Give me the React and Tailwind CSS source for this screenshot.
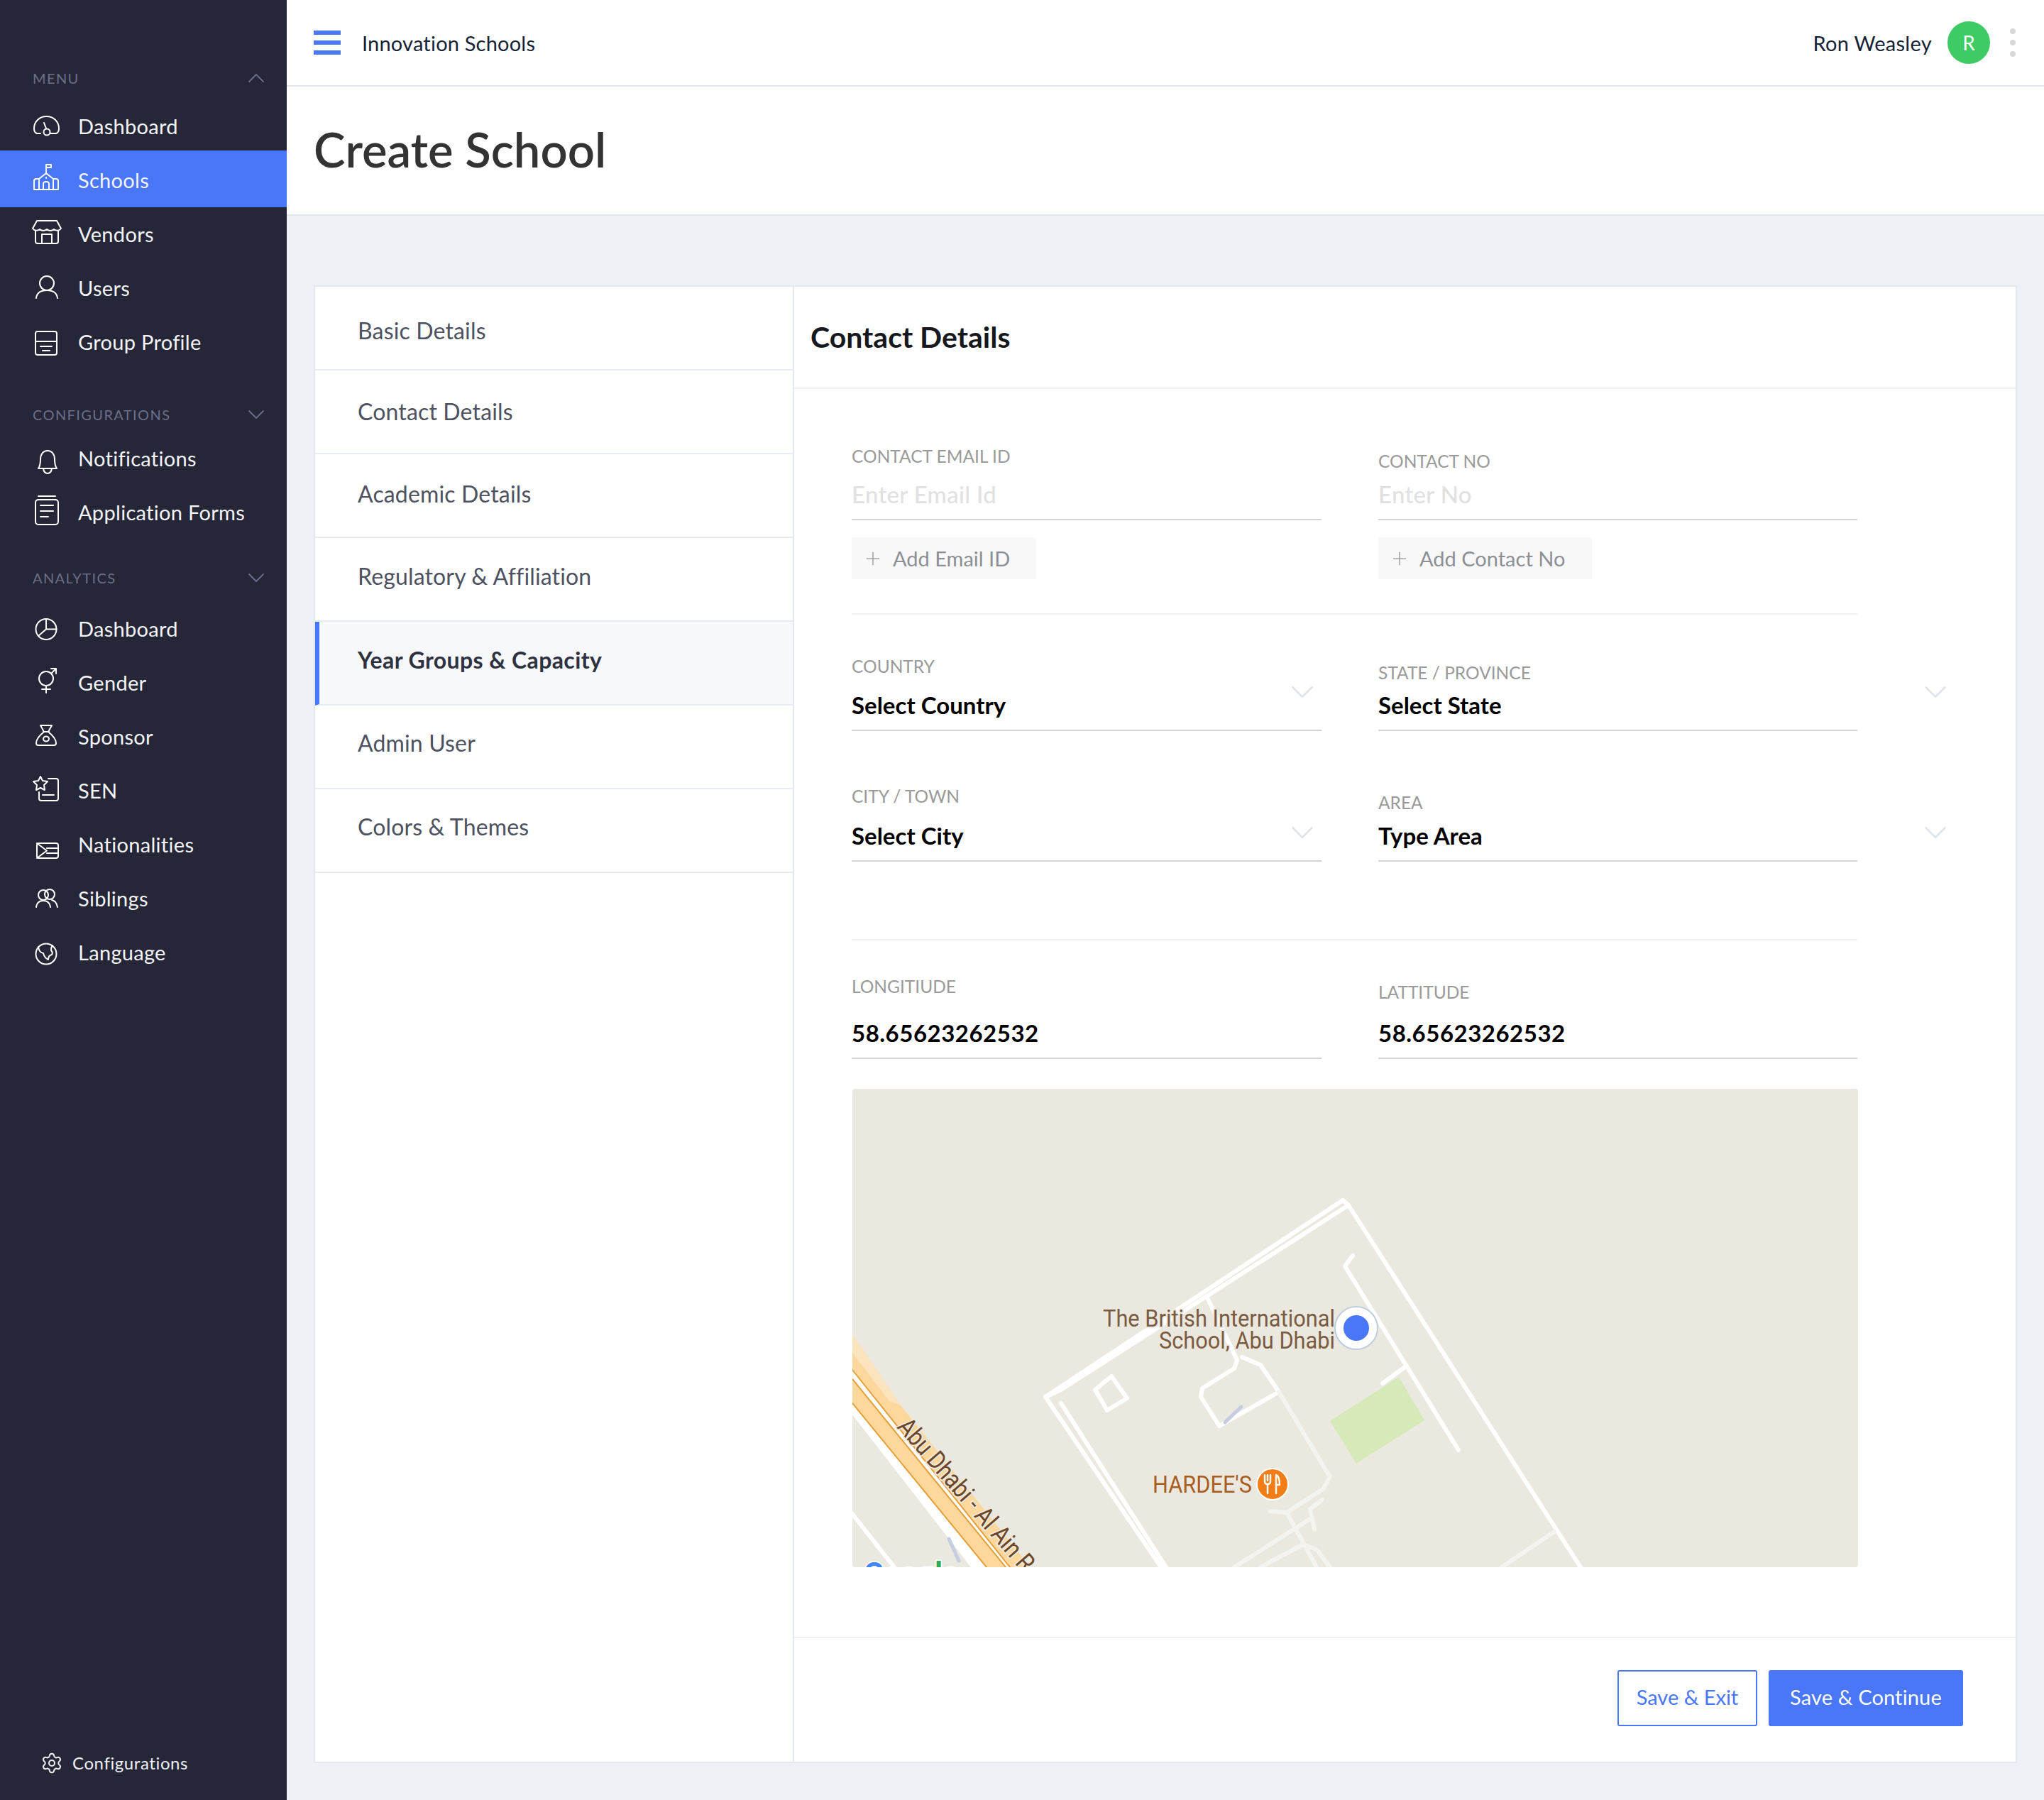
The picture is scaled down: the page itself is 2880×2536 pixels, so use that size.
import React from 'react';
import { ChevronDown, ChevronUp, Plus, Settings } from 'lucide-react';

const Icon = ({ children }) => (
  <svg viewBox="0 0 40 40" fill="none" stroke="currentColor" strokeWidth="2" strokeLinecap="round" strokeLinejoin="round" className="h-10 w-10 shrink-0 overflow-visible">
    {children}
  </svg>
);

const icons = {
  gauge: <><path d="M11 30H6Q2 29 2 23C2 13 10 6 19.5 6C29 6 37 13 37 23Q37 29 33 30H25" /><circle cx="20" cy="28" r="4.5" /><path d="M19 23L16 15" /></>,
  school: <><path d="M2 33V21Q2 18 5 18H9L19 10L29 18H33Q36 18 36 21V33Z" /><path d="M9 18V33M29 18V33M15 33V25Q15 22 19 22Q23 22 23 25V33" /><path d="M19 10V-2H26V2H19M19 16V17" /></>,
  store: <><path d="M6 1H34L40 12Q36 17 30 13Q25 17 20 13Q15 17 10 13Q4 17 0 12Z" /><path d="M4 15V30Q4 33 7 33H33Q36 33 36 30V15M13 33V20H27V33" /></>,
  user: <><circle cx="20" cy="13" r="10" /><path d="M5 34C6 26 12 23 20 23C28 23 34 26 35 34" /></>,
  profile: <><rect x="4" y="5" width="30" height="33" rx="3" /><path d="M4 19H34M11 26H27M14 32H24" /></>,
  bell: <><path d="M8 34C11 30 11 26 11 21C11 14 15 9 21 9C27 9 31 14 31 21C31 26 31 30 34 34Z" /><path d="M15 34Q16 41 21 41Q26 41 27 34" /></>,
  forms: <><path d="M8 -3H32" /><rect x="4" y="2" width="32" height="35" rx="4" /><path d="M11 10H29M11 18H29M11 26H22" /></>,
  pie: <><circle cx="19" cy="20.5" r="14.5" /><path d="M19 6V20.5H33.5M19 20.5L8 30" /></>,
  gender: <><circle cx="19" cy="14" r="10" /><path d="M26 7L33 0M26 0H33V7M19 24V34M13 29H25" /></>,
  sponsor: <><path d="M11 4H27L22 13Q33 22 33 29Q33 32 30 32H8Q5 32 5 29Q5 22 16 13ZM15 13H23" /><ellipse cx="19" cy="23" rx="4" ry="3.5" /></>,
  sen: <><path d="M22 3H33Q36 3 36 6V31Q36 34 33 34H12Q9 34 9 31V22M14 26H30" /><path d="M11 0L14 6L21 7L16 12L17 19L11 16L5 19L6 12L1 7L8 6Z" /></>,
  flag: <><rect x="6" y="18" width="30" height="21" rx="3" /><path d="M6 18L20 28.5L6 39M20 25H36M20 32H36" /></>,
  siblings: <><circle cx="15" cy="15" r="7" /><circle cx="24" cy="14" r="7" /><path d="M5 32C6 25 10 23 15 23C20 23 24 25 25 32M27 22C31 23 34 26 35 32" /></>,
  globe: <><circle cx="19" cy="22" r="14.5" /><path d="M8 12Q9 20 15 21Q17 28 22 30Q22 24 27 23Q29 20 26 17Q26 12 28 10" /></>,
};

const NavItem = ({ icon, label, active }) => (
  <div className={active ? 'flex h-[80px] -mt-[4px] pt-[4px] items-center gap-[24px] bg-[#4a76f8] pl-[46px] text-white' : 'flex h-[76px] items-center gap-[24px] pl-[46px] text-white'}>
    <Icon>{icons[icon]}</Icon>
    <span className="text-[29px] tracking-[0.3px] text-[#f4f4f6]">{label}</span>
  </div>
);

const SectionHead = ({ label, open, className }) => (
  <div className={`flex h-[40px] items-center justify-between pl-[46px] pr-[23px] text-[#6c6e88] ${className}`}>
    <span className="text-[20px] tracking-[1.4px] uppercase">{label}</span>
    {open ? <ChevronUp size={40} strokeWidth={1.1} /> : <ChevronDown size={40} strokeWidth={1.1} />}
  </div>
);

const Sidebar = () => (
  <aside className="flex w-[404px] shrink-0 flex-col bg-[#252638] pt-[90px]">
    <SectionHead label="Menu" open className="mb-[10px]" />
    <NavItem icon="gauge" label="Dashboard" />
    <NavItem icon="school" label="Schools" active />
    <NavItem icon="store" label="Vendors" />
    <NavItem icon="user" label="Users" />
    <NavItem icon="profile" label="Group Profile" />

    <SectionHead label="Configurations" className="mt-[44px] mb-[4px]" />
    <NavItem icon="bell" label="Notifications" />
    <NavItem icon="forms" label="Application Forms" />

    <SectionHead label="Analytics" className="mt-[34px] mb-[14px]" />
    <NavItem icon="pie" label="Dashboard" />
    <NavItem icon="gender" label="Gender" />
    <NavItem icon="sponsor" label="Sponsor" />
    <NavItem icon="sen" label="SEN" />
    <NavItem icon="flag" label="Nationalities" />
    <NavItem icon="siblings" label="Siblings" />
    <NavItem icon="globe" label="Language" />

    <div className="mt-auto mb-[32px] flex h-[40px] items-center gap-[13px] pl-[57px] text-[#f0f0f3]">
      <Settings size={32} strokeWidth={1.5} />
      <span className="text-[24px] tracking-[0.6px]">Configurations</span>
    </div>
  </aside>
);

const Header = () => (
  <header className="flex h-[122px] shrink-0 items-center justify-between border-b-2 border-[#e3e7ec] bg-white pl-[38px] pr-[40px]">
    <div className="flex items-center gap-[30px]">
      <div className="flex w-[38px] flex-col gap-[8px] pb-[1px]">
        <div className="h-[6px] bg-[#4a76f8]" />
        <div className="h-[6px] bg-[#4a76f8]" />
        <div className="h-[6px] bg-[#4a76f8]" />
      </div>
      <span className="pt-[2px] text-[29px] tracking-[0.2px] text-[#152238]">Innovation Schools</span>
    </div>
    <div className="flex items-center">
      <span className="pt-[2px] text-[29px] tracking-[0.3px] text-[#152238]">Ron Weasley</span>
      <div className="ml-[22px] flex h-[60px] w-[60px] items-center justify-center rounded-full bg-[#3ecb64] text-[28px] text-white">R</div>
      <div className="ml-[28px] flex flex-col gap-[8px]">
        <div className="h-[8px] w-[8px] rounded-full bg-[#d8d8d8]" />
        <div className="h-[8px] w-[8px] rounded-full bg-[#d8d8d8]" />
        <div className="h-[8px] w-[8px] rounded-full bg-[#d8d8d8]" />
      </div>
    </div>
  </header>
);

// nudge: the labels don't sit dead centre in their rows in the design
const steps = [
  { label: 'Basic Details', nudge: 'pt-[8px]' },
  { label: 'Contact Details', nudge: '' },
  { label: 'Academic Details', nudge: 'pb-[4px]' },
  { label: 'Regulatory & Affiliation', nudge: 'pb-[8px]' },
  { label: 'Year Groups & Capacity', nudge: 'pb-[8px]', active: true },
  { label: 'Admin User', nudge: 'pb-[10px]' },
  { label: 'Colors & Themes', nudge: 'pb-[10px]' },
];

const StepList = () => (
  <div className="w-[675px] shrink-0 border-r-2 border-[#e3e7ee]">
    {steps.map((s) => (
      <div
        key={s.label}
        className={s.active
          ? `flex h-[118px] items-center border-b-2 border-l-[6px] border-[#e8ebf0] border-l-[#4a76f8] bg-[#f7f8fb] pl-[54px] text-[32px] font-bold tracking-[0.4px] text-[#2e3240] ${s.nudge}`
          : `flex h-[118px] items-center border-b-2 border-[#e8ebf0] pl-[60px] text-[32px] tracking-[0.15px] text-[#4d5160] ${s.nudge}`}
      >
        {s.label}
      </div>
    ))}
  </div>
);

const Field = ({ label, labelClass, children, chevron, width }) => (
  <div className={`relative ${width}`}>
    <div className={`h-[30px] text-[24.5px] leading-[30px] text-[#9a9a9a] uppercase ${labelClass}`}>{label}</div>
    <div className="h-[62px] border-b-2 border-[#d4d4d4] pb-[10px] text-[33px] leading-[50px]">{children}</div>
    {chevron}
  </div>
);

const Chevron = ({ className }) => (
  <ChevronDown size={54} strokeWidth={1.1} className={`absolute text-[#dfe4ec] ${className}`} />
);

const AddButton = ({ label, width }) => (
  <div className={`flex h-[59px] items-center gap-[13px] bg-[#f8f8f8] pl-[15px] text-[29px] text-[#8c9096] ${width}`}>
    <Plus size={30} strokeWidth={1} />
    <span>{label}</span>
  </div>
);

const MapView = () => (
  <div className="mt-[42px] ml-[1px] h-[674px] w-[1417px] overflow-hidden rounded-[4px] bg-[#ebe9df]">
    <svg viewBox="0 0 1417 674" className="h-full w-full" fill="none" strokeLinecap="round" strokeLinejoin="round">
      {/* highway */}
      <path d="M0 459L167 674H222L0 396Z" fill="#ffffff" />
      <path d="M0 346L68 446L251 674H222L0 396Z" fill="#fdd79c" />
      <path d="M0 346L68 446L52 440L0 372Z" fill="#fbe3bd" />
      <path d="M0 409L216 674H189L0 443Z" fill="#fdd79c" />
      <path d="M0 396L222 674M0 443L189 674M0 409L216 674" stroke="#e4a03a" strokeWidth="2" />
      <path d="M0 599L59 674" stroke="#ffffff" strokeWidth="6" />
      <path d="M136 634L150 665" stroke="#c6cde2" strokeWidth="5" />
      {/* campus roads */}
      <g stroke="#ffffff" strokeWidth="6">
        <path d="M691 157L699 164L294 424L272 434L691 157" />
        <path d="M699 164L1026 674" />
        <path d="M272 434L435 674" />
        <path d="M294 443L442 674" />
        <path d="M705 235L694 250L854 509" />
        <path d="M780 391L747 415" />
        <path d="M499 292L542 382L538 394L493 422L491 434L517 475L601 427" />
        <path d="M549 378L575 389L601 427" />
        <path d="M365 405L342 424L359 453L387 436Z" />
      </g>
      <g stroke="#f3f3f0" strokeWidth="6">
        <path d="M601 427L673 547L663 564L612 597L589 595" />
        <path d="M612 597L654 674M662 579L645 592L651 621M645 606L538 674M635 642L575 674M635 642L654 649L673 674M989 624L915 674" />
      </g>
      <path d="M770 406L806 467L710 528L673 468Z" fill="#d5e9b9" />
      <path d="M525 470L548 448" stroke="#c6cde2" strokeWidth="5" />

      <text x="62" y="477" transform="rotate(49 62 477)" fontFamily="Roboto, sans-serif" fontSize="36" fill="#6b4526" stroke="#ebe9df" strokeWidth="4" paintOrder="stroke" textLength="290" lengthAdjust="spacingAndGlyphs">Abu Dhabi - Al Ain Rd</text>

      <text x="680" y="335" textAnchor="end" fontFamily="Roboto, sans-serif" fontSize="34" fill="#7a5a40" stroke="#ebe9df" strokeWidth="4" paintOrder="stroke" textLength="327" lengthAdjust="spacingAndGlyphs">The British International</text>
      <text x="680" y="366" textAnchor="end" fontFamily="Roboto, sans-serif" fontSize="34" fill="#7a5a40" stroke="#ebe9df" strokeWidth="4" paintOrder="stroke" textLength="248" lengthAdjust="spacingAndGlyphs">School, Abu Dhabi</text>
      <circle cx="710" cy="337" r="30" fill="#ffffff" stroke="#bccede" strokeWidth="2" />
      <circle cx="710" cy="337" r="18" fill="#4a76f8" />

      <text x="563" y="569" textAnchor="end" fontFamily="Roboto, sans-serif" fontSize="34" fill="#a85c1e" stroke="#ebe9df" strokeWidth="4" paintOrder="stroke" textLength="140" lengthAdjust="spacingAndGlyphs">HARDEE'S</text>
      <circle cx="592" cy="557" r="22" fill="#f37c17" stroke="#ffffff" strokeWidth="2" />
      <path d="M581 544V553Q581 557 585 557V570M585 544V552M589 544V553Q589 557 585 557M597 570V558H602Q602 546 597 544Z" stroke="#ffffff" strokeWidth="2.5" />

      <text x="16" y="697" fontFamily="Roboto, sans-serif" fontSize="42" fontWeight="700" stroke="#ffffff" strokeWidth="3" paintOrder="stroke">
        <tspan fill="#4285f4">G</tspan><tspan fill="#ea4335">o</tspan><tspan fill="#fbbc05">o</tspan><tspan fill="#4285f4">g</tspan><tspan fill="#34a853">l</tspan><tspan fill="#ea4335">e</tspan>
      </text>
    </svg>
  </div>
);

const ContactForm = () => (
  <div className="flex min-w-0 flex-1 flex-col">
    <div className="flex h-[144px] shrink-0 items-center border-b-2 border-[#eef0f3] pl-[23px] text-[41px] font-bold text-[#16181d]">Contact Details</div>

    <div className="pl-[81px]">
      <div className="mt-[80px] flex items-start gap-[80px]">
        <div>
          <Field label="Contact Email ID" labelClass="mb-[13px]" width="w-[662px]"><span className="font-medium tracking-[0.3px] text-[#e1e1e1]">Enter Email Id</span></Field>
          <div className="mt-[24px]"><AddButton label="Add Email ID" width="w-[260px]" /></div>
        </div>
        <div>
          <Field label="Contact No" labelClass="mt-[7px] mb-[6px]" width="w-[675px]"><span className="font-medium tracking-[0.3px] text-[#e1e1e1]">Enter No</span></Field>
          <div className="mt-[24px]"><AddButton label="Add Contact No" width="w-[301px]" /></div>
        </div>
      </div>
      <div className="mt-[48px] h-[2px] w-[1417px] bg-[#f1f2f4]" />

      <div className="mt-[58px] flex items-start gap-[80px] text-black">
        <Field label="Country" labelClass="mb-[14px]" width="w-[662px]" chevron={<Chevron className="top-[24px] right-0" />}>
          <span className="font-bold">Select Country</span>
        </Field>
        <Field label="State / Province" labelClass="mt-[9px] mb-[5px]" width="w-[675px]" chevron={<Chevron className="top-[24px] -right-[137px]" />}>
          <span className="font-bold">Select State</span>
        </Field>
      </div>

      <div className="mt-[77px] flex items-start gap-[80px] text-black">
        <Field label="City / Town" labelClass="mb-[15px]" width="w-[662px]" chevron={<Chevron className="top-[39px] right-0" />}>
          <span className="font-bold">Select City</span>
        </Field>
        <Field label="Area" labelClass="mt-[9px] mb-[6px]" width="w-[675px]" chevron={<Chevron className="top-[39px] -right-[137px]" />}>
          <span className="font-bold">Type Area</span>
        </Field>
      </div>
      <div className="mt-[109px] h-[2px] w-[1417px] bg-[#f1f2f4]" />

      <div className="mt-[50px] flex items-start gap-[80px] text-black">
        <Field label="Longitiude" labelClass="mb-[25px]" width="w-[662px]"><span className="font-bold tracking-[0.5px]">58.65623262532</span></Field>
        <Field label="Lattitude" labelClass="mt-[8px] mb-[17px]" width="w-[675px]"><span className="font-bold tracking-[0.5px]">58.65623262532</span></Field>
      </div>

      <MapView />
    </div>

    <div className="mt-auto flex h-[176px] shrink-0 items-start justify-end gap-[16px] border-t-2 border-[#eef0f3] pt-[45px] pr-[74px]">
      <button className="h-[79px] w-[197px] rounded-[3px] border-2 border-[#4a76f8] bg-white pb-[4px] text-[29px] text-[#4a76f8]">Save &amp; Exit</button>
      <button className="h-[79px] w-[274px] rounded-[3px] bg-[#4a76f8] pb-[4px] text-[29px] tracking-[0.15px] text-white">Save &amp; Continue</button>
    </div>
  </div>
);

export default function App() {
  return (
    <div className="flex min-h-[2536px] w-[2880px] font-[Lato,sans-serif]">
      <Sidebar />
      <main className="flex min-w-0 flex-1 flex-col bg-[#edf0f5]">
        <Header />
        <div className="flex h-[182px] shrink-0 items-center border-b-2 border-[#e3e7ec] bg-white pb-[4px] pl-[38px] text-[67px] font-semibold text-[#333333]">Create School</div>
        <div className="flex flex-1 px-[38px] pt-[98px] pb-[52px]">
          <div className="flex flex-1 border-2 border-[#e3e7ee] bg-white">
            <StepList />
            <ContactForm />
          </div>
        </div>
      </main>
    </div>
  );
}
